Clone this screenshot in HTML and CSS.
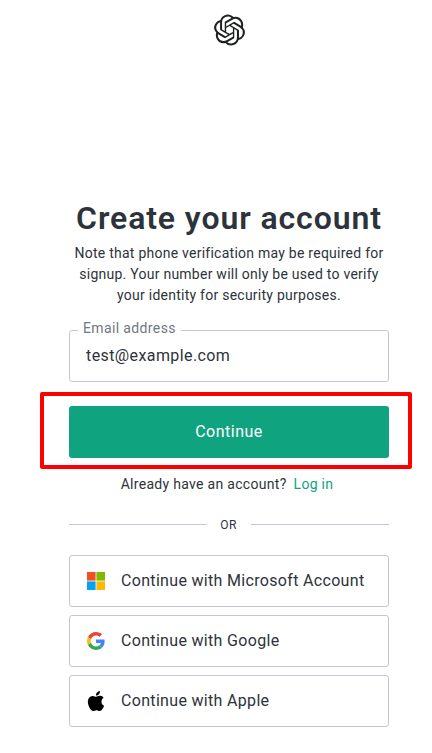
FILE: index.html
```html
<!DOCTYPE html>
<html lang="en">
  <head>
    <meta charset="utf-8">
    <title>Create your account</title>
    <link rel="stylesheet" href="styles.css">
  </head>
  <body>
    <header>
      <svg class="logo" viewBox="0 0 24 24" fill="#202123">
        <path d="M22.2819 9.8211a5.9847 5.9847 0 0 0-.5157-4.9108 6.0462 6.0462 0 0 0-6.5098-2.9A6.0651 6.0651 0 0 0 4.9807 4.1818a5.9847 5.9847 0 0 0-3.9977 2.9 6.0462 6.0462 0 0 0 .7427 7.0966 5.98 5.98 0 0 0 .511 4.9107 6.051 6.051 0 0 0 6.5146 2.9001A5.9847 5.9847 0 0 0 13.2599 24a6.0557 6.0557 0 0 0 5.7718-4.2058 5.9894 5.9894 0 0 0 3.9977-2.9001 6.0557 6.0557 0 0 0-.7475-7.0729zm-9.022 12.6081a4.4755 4.4755 0 0 1-2.8764-1.0408l.1419-.0804 4.7783-2.7582a.7948.7948 0 0 0 .3927-.6813v-6.7369l2.02 1.1686a.071.071 0 0 1 .038.052v5.5826a4.504 4.504 0 0 1-4.4945 4.4944zm-9.6607-4.1254a4.4708 4.4708 0 0 1-.5346-3.0137l.142.0852 4.783 2.7582a.7712.7712 0 0 0 .7806 0l5.8428-3.3685v2.3324a.0804.0804 0 0 1-.0332.0615L9.74 19.9502a4.4992 4.4992 0 0 1-6.1408-1.6464zM2.3408 7.8956a4.485 4.485 0 0 1 2.3655-1.9728V11.6a.7664.7664 0 0 0 .3879.6765l5.8144 3.3543-2.0201 1.1685a.0757.0757 0 0 1-.071 0l-4.8303-2.7865A4.504 4.504 0 0 1 2.3408 7.872zm16.5963 3.8558L13.1038 8.364 15.1192 7.2a.0757.0757 0 0 1 .071 0l4.8303 2.7913a4.4944 4.4944 0 0 1-.6765 8.1042v-5.6772a.79.79 0 0 0-.407-.667zm2.0107-3.0231l-.142-.0852-4.7735-2.7818a.7759.7759 0 0 0-.7854 0L9.409 9.2297V6.8974a.0662.0662 0 0 1 .0284-.0615l4.8303-2.7866a4.4992 4.4992 0 0 1 6.6802 4.66zM8.3065 12.863l-2.02-1.1638a.0804.0804 0 0 1-.038-.0567V6.0742a4.4992 4.4992 0 0 1 7.3757-3.4537l-.142.0805L8.704 5.459a.7948.7948 0 0 0-.3927.6813zm1.0976-2.3654l2.602-1.4998 2.6069 1.4998v2.9994l-2.5974 1.4997-2.6067-1.4997Z"/>
      </svg>
    </header>
    <main>
      <h1>Create your account</h1>
      <p class="note">
        Note that phone verification may be required for<br>
        signup. Your number will only be used to verify<br>
        your identity for security purposes.
      </p>
      <form>
        <div class="field">
          <label for="email">Email address</label>
          <input id="email" type="text" value="test@example.com">
        </div>
        <div class="submit">
          <button type="submit">Continue</button>
        </div>
      </form>
      <p class="login"><span>Already have an account?</span><a href="#">Log in</a></p>
      <div class="divider"><span>OR</span></div>
      <div class="providers">
        <a class="provider microsoft" href="#">
          <svg viewBox="0 0 18 18">
            <path fill="#f25022" d="M0 0h8.6v8.6H0z"/>
            <path fill="#7fba00" d="M9.4 0H18v8.6H9.4z"/>
            <path fill="#00a4ef" d="M0 9.4h8.6V18H0z"/>
            <path fill="#ffb900" d="M9.4 9.4H18V18H9.4z"/>
          </svg>
          <span>Continue with Microsoft Account</span>
        </a>
        <a class="provider google" href="#">
          <svg viewBox="0 0 48 48">
            <path fill="#ea4335" d="M24 9.5c3.54 0 6.71 1.22 9.21 3.6l6.85-6.85C35.9 2.38 30.47 0 24 0 14.62 0 6.51 5.38 2.56 13.22l7.98 6.19C12.43 13.72 17.74 9.5 24 9.5z"/>
            <path fill="#4285f4" d="M46.98 24.55c0-1.57-.15-3.09-.38-4.55H24v9.02h12.94c-.58 2.96-2.26 5.48-4.78 7.18l7.73 6c4.51-4.18 7.09-10.36 7.09-17.65z"/>
            <path fill="#fbbc05" d="M10.53 28.59c-.48-1.45-.76-2.99-.76-4.59s.27-3.14.76-4.59l-7.98-6.19C.92 16.46 0 20.12 0 24c0 3.88.92 7.54 2.56 10.78l7.97-6.19z"/>
            <path fill="#34a853" d="M24 48c6.48 0 11.93-2.13 15.89-5.81l-7.73-6c-2.15 1.45-4.92 2.3-8.16 2.3-6.26 0-11.57-4.22-13.47-9.91l-7.98 6.19C6.51 42.62 14.62 48 24 48z"/>
          </svg>
          <span>Continue with Google</span>
        </a>
        <a class="provider apple" href="#">
          <svg viewBox="0 0 814 1000">
            <path d="M788.1 340.9c-5.8 4.5-108.2 62.2-108.2 190.5 0 148.4 130.3 200.9 134.2 202.2-.6 3.2-20.7 71.9-68.7 141.9-42.8 61.6-87.5 123.1-155.5 123.1s-85.5-39.5-164-39.5c-76.5 0-103.7 40.8-165.9 40.8s-105.6-57-155.5-127C46.7 790.7 0 663 0 541.8c0-194.4 126.4-297.5 250.8-297.5 66.1 0 121.2 43.4 162.7 43.4 39.5 0 101.1-46 176.3-46 28.5 0 130.9 2.6 198.3 99.2zm-234-181.5c31.1-36.9 53.1-88.1 53.1-139.3 0-7.1-.6-14.3-1.9-20.1-50.6 1.9-110.8 33.7-147.1 75.8-28.5 32.4-55.1 83.6-55.1 135.5 0 7.8 1.3 15.6 1.9 18.1 3.2.6 8.4 1.3 13.6 1.3 45.4 0 102.5-30.4 135.5-71.3z"/>
          </svg>
          <span>Continue with Apple</span>
        </a>
      </div>
    </main>
  </body>
</html>
```

FILE: styles.css
```css
*,
*::before,
*::after {
  box-sizing: border-box;
}

body {
  margin: 0;
  padding-left: 69px;
  background-color: #fff;
  color: #2d333a;
  font-family: Roboto, "Liberation Sans", sans-serif;
  overflow: hidden;
}

header,
main {
  width: 320px;
}

header {
  height: 200px;
  padding-top: 14px;
  text-align: center;
}

.logo {
  width: 31px;
  height: 32px;
}

h1 {
  margin: 0;
  font-size: 32px;
  font-weight: 600;
  line-height: 37px;
  letter-spacing: 0.9px;
  text-align: center;
  white-space: nowrap;
}

p {
  margin: 0;
  font-size: 14px;
  line-height: 21px;
  letter-spacing: 0.25px;
}

.note {
  margin-top: 6px;
  text-align: center;
  white-space: nowrap;
}

.field {
  position: relative;
  margin-top: 24px;
}

/* sits on the top border of the input */
.field label {
  position: absolute;
  top: -12px;
  left: 9px;
  padding: 0 5px;
  background-color: #fff;
  color: #6f7780;
  font-size: 14px;
  line-height: 20px;
  letter-spacing: 0.37px;
  white-space: nowrap;
}

.field input {
  display: block;
  width: 320px;
  height: 52px;
  padding: 0 16px 2px;
  border: 1px solid #c2c8d0;
  border-radius: 3px;
  color: #2d333a;
  font: 16px Roboto, sans-serif;
  letter-spacing: 0.4px;
  outline: none;
}

.submit {
  position: relative;
  margin-top: 24px;
}

/* red frame around the button */
.submit::after {
  content: "";
  position: absolute;
  top: -14px;
  left: -29px;
  width: 372px;
  height: 77px;
  border: 4px solid #f00;
  border-radius: 2px;
  pointer-events: none;
}

button {
  display: block;
  width: 320px;
  height: 52px;
  padding: 0 0 2px;
  border: 0;
  border-radius: 3px;
  background-color: #10a37f;
  color: #fff;
  font: 16px Roboto, sans-serif;
  letter-spacing: 0.5px;
}

a {
  color: #10a37f;
  text-decoration: none;
}

.login {
  display: flex;
  justify-content: center;
  gap: 7px;
  margin-top: 16px;
  padding-right: 4px;
  letter-spacing: 0.3px;
  white-space: nowrap;
}

.divider {
  display: flex;
  align-items: center;
  margin-top: 20px;
  height: 19px;
  font-size: 12px;
}

.divider::before,
.divider::after {
  content: "";
  flex: 1;
  height: 1px;
  background-color: #c2c8d0;
}

.divider span {
  width: 45px;
  margin-left: -1px;
  letter-spacing: 0.3px;
  text-align: center;
}

.providers {
  display: flex;
  flex-direction: column;
  gap: 8px;
  margin-top: 21px;
}

.provider {
  display: flex;
  align-items: center;
  gap: 16px;
  height: 52px;
  padding-left: 17px;
  border: 1px solid #c2c8d0;
  border-radius: 3px;
  color: #2d333a;
  font-size: 16px;
  letter-spacing: 0.32px;
  white-space: nowrap;
}

.provider svg {
  width: 18px;
  height: 18px;
}

.provider span {
  padding-bottom: 2px;
}

.apple svg {
  height: 20px;
}
```
